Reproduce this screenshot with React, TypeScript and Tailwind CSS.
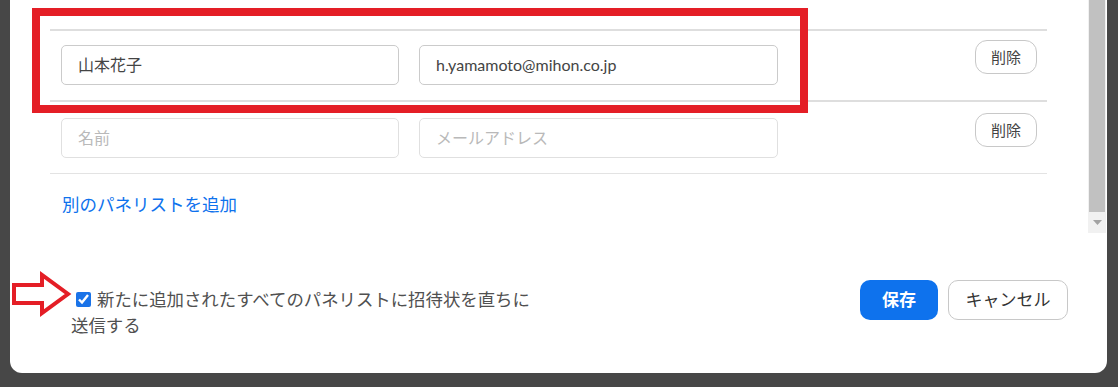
import React from "react";

const JP = { fontFamily: 'Lato, "Noto Sans CJK JP", "Noto Sans", sans-serif' };

function Row({
  name,
  email,
  filled,
  top,
}: {
  name: string;
  email: string;
  filled: boolean;
  top: string;
}) {
  const border = filled ? "border-[#cbcbcb]" : "border-[#e0e0e0]";
  const text = filled ? "text-[#444444]" : "text-[#b9b9b9]";
  return (
    <div className={`flex items-start pb-[15px] ${top}`}>
      <div className="mt-[5px] ml-[11px] flex gap-[20px]">
        <div
          className={`w-[338px] h-[40px] border ${border} rounded-[5px] flex items-center px-[16px] text-[16px] ${text}`}
        >
          {name}
        </div>
        <div
          className={`w-[359px] h-[40px] border ${border} rounded-[5px] flex items-center px-[16px] text-[16px] ${text}`}
        >
          {email}
        </div>
      </div>
      <div className="ml-auto mr-[10px] w-[62px] h-[34px] border border-[#c8c8c8] rounded-[12px] flex items-center justify-center text-[15px] text-[#444444]">
        削除
      </div>
    </div>
  );
}

export default function App() {
  return (
    <div className="w-[1118px] h-[387px] bg-[#474747] flex pl-[10px] pr-[11px] pb-[14px] relative" style={JP}>
      <div className="flex-1 bg-white rounded-b-[12px] flex flex-col">
        <div className="h-[233px] flex">
          <div className="flex-1 pl-[40px] pr-[41px] pt-[29px]">
            <div className="h-[2px] bg-[#dedede]" />
            <Row name="山本花子" email="h.yamamoto@mihon.co.jp" filled top="pt-[9px]" />
            <div className="h-[2px] bg-[#dedede]" />
            <Row name="名前" email="メールアドレス" filled={false} top="pt-[11px]" />
            <div className="h-[1px] bg-[#e3e3e3]" />
            <div className="mt-[19px] ml-[12px] text-[17.5px] leading-[24px] text-[#0e72ed]">
              別のパネリストを追加
            </div>
          </div>
          <div className="w-[18px] mr-[1px] bg-[#f1f1f1] flex flex-col">
            <div className="h-[212px] mx-[1px] bg-[#c1c1c1]" />
            <div className="flex-1 flex items-center justify-center">
              <svg width="9" height="5" viewBox="0 0 9 5">
                <path d="M0 0 L9 0 L4.5 5 Z" fill="#a3a3a3" />
              </svg>
            </div>
          </div>
        </div>
        <div className="flex-1 flex items-start justify-between pl-[61px] pr-[39px]">
          <div className="mt-[54px] w-[470px] text-[17.4px] leading-[26px] text-[#505050]">
            <input
              type="checkbox"
              defaultChecked
              className="w-[15px] h-[15px] ml-[5px] mr-[6px] align-[-1px] accent-[#1a73e8]"
            />
            新たに追加されたすべてのパネリストに招待状を直ちに送信する
          </div>
          <div className="mt-[47px] flex gap-[10px]">
            <div className="w-[78px] h-[40px] rounded-[10px] bg-[#0e72ed] text-white font-bold text-[17px] flex items-center justify-center">
              保存
            </div>
            <div className="w-[120px] h-[40px] rounded-[10px] border border-[#c8c8c8] text-[#333333] text-[17px] flex items-center justify-center">
              キャンセル
            </div>
          </div>
        </div>
      </div>

      <div className="absolute left-[32px] top-[8px] w-[776px] h-[105px] border-[8px] border-[#e41e26]" />

      <svg className="absolute left-0 top-[260px]" width="80" height="70" viewBox="0 0 80 70">
        <path
          d="M14 25 L42 25 L42 15 L68 34 L42 53 L42 43 L14 43 Z"
          fill="white"
          stroke="#e41e26"
          strokeWidth="4"
          strokeLinejoin="miter"
        />
      </svg>
    </div>
  );
}
